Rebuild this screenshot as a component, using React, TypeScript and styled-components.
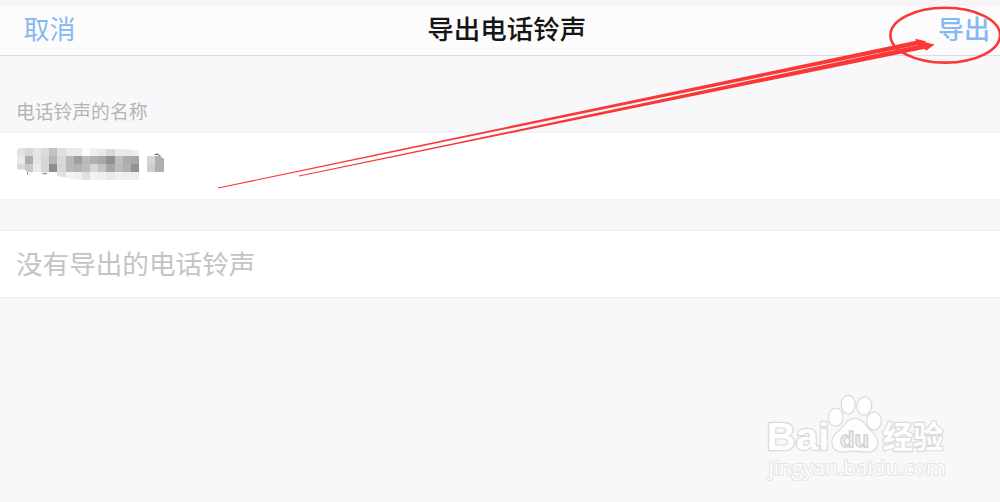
import styled, { createGlobalStyle } from "styled-components";

// grey levels of the blurred name, one row of cells per line, 0 = empty
const MOSAIC = [
  [226, 215, 229, 219, 194, 222, 234, 234, 252, 238, 232, 216, 232, 232, 238, 0, 0, 0],
  [233, 173, 228, 214, 181, 216, 184, 158, 186, 176, 168, 145, 191, 173, 168, 0, 214, 176],
  [217, 201, 235, 215, 141, 214, 184, 178, 189, 214, 196, 166, 188, 176, 146, 0, 206, 174],
  [0, 0, 0, 0, 0, 225, 243, 240, 224, 242, 240, 233, 240, 238, 238, 0, 0, 0],
];
const CELL = 8.17;

function App() {
  return (
    <Page>
      <GlobalStyle />
      <StatusStrip />
      <NavBar>
        <NavButton>取消</NavButton>
        <Title>导出电话铃声</Title>
        <NavButton $strong>导出</NavButton>
      </NavBar>
      <SectionLabel>电话铃声的名称</SectionLabel>
      <Row>
        <Mosaic />
      </Row>
      <Gap />
      <Row>
        <EmptyText>没有导出的电话铃声</EmptyText>
      </Row>
      <Marker />
      <Watermark />
    </Page>
  );
}

export default App;

function Mosaic() {
  return (
    <MosaicSvg width="150" height="34" viewBox="0 0 150 34">
      <clipPath id="smudge">
        <path d="M0.5 5Q0.5 0 5 0H66L124 2V32.5H66L41 28V24.5H11Q10 21.5 7 21.5H0.5ZM131 7H142L148.5 11V25H131Z" />
      </clipPath>
      <g clipPath="url(#smudge)" shapeRendering="crispEdges">
        {MOSAIC.map((cells, y) =>
          cells.map((v, x) =>
            v ? (
              <rect
                key={`${x}-${y}`}
                x={x * CELL + 0.5}
                y={y * CELL - 0.4}
                width={CELL + 0.1}
                height={CELL + 0.1}
                fill={`rgb(${v},${v},${v})`}
              />
            ) : null
          )
        )}
      </g>
      <path d="M11.5 24.5v2M26.5 25l2.2 1 2.2-1M138.5 6.5l3-.4 3 2" fill="none" stroke="#777" strokeWidth="1.1" />
    </MosaicSvg>
  );
}

// hand drawn arrow and circle round the export button
function Marker() {
  return (
    <Overlay width="1000" height="200" viewBox="0 0 1000 200">
      <ellipse cx="945.2" cy="35.2" rx="54.8" ry="27.4" fill="none" stroke="#fb3636" strokeWidth="2.6" />
      <g fill="#fb3636">
        <path d="M218 187.6L450 138.8L916 40.8L915 38.8L926 41.2L921 46L917 45.2L450 140.6L218 188.5Z" />
        <path d="M299 175.5L450 143.9L922 44.2L924 42L934.5 44.4L926.5 50.4L924 49L450 145.5L299 176.5Z" />
      </g>
    </Overlay>
  );
}

function Watermark() {
  return (
    <WatermarkSvg width="200" height="100" viewBox="0 0 200 100">
      <g fill="#fefefe" stroke="#d9dadc" strokeWidth="2.4" paintOrder="stroke" strokeLinejoin="round">
        <Latin x="16.5" y="65.3" fontSize="39" textLength="63" lengthAdjust="spacingAndGlyphs">
          Bai
        </Latin>
        <ellipse cx="85.7" cy="32.3" rx="6.7" ry="8.5" />
        <ellipse cx="98.3" cy="19.6" rx="6.5" ry="8.8" />
        <ellipse cx="114.3" cy="21" rx="6.8" ry="8.5" transform="rotate(10 114.3 21)" />
        <ellipse cx="124" cy="36" rx="6.7" ry="8.5" />
        <path d="M104.5 34C97 34 95 41 89.5 46C84.5 50 82 53.5 82.5 58.5C83.5 64 87.5 66.5 92.5 66.5C97 66.5 100 65.5 104.5 65.5C109 65.5 112 66.5 117 66.5C122.5 66.5 126.5 64 127.2 58.5C127.5 53.5 124.5 50 120.5 46C115 41 112 34 104.5 34Z" />
        <text x="132.5" y="62.5" fontSize="30.5" fontWeight="700" textLength="61" lengthAdjust="spacingAndGlyphs">
          经验
        </text>
        <text
          x="18.5"
          y="90"
          fontSize="20"
          stroke="#e3e4e6"
          strokeWidth="2"
          textLength="177"
          lengthAdjust="spacingAndGlyphs"
        >
          jingyan.baidu.com
        </text>
      </g>
      <Latin
        x="90"
        y="61.5"
        fontSize="22"
        fill="#f3f3f4"
        stroke="#d0d1d3"
        strokeWidth="1.3"
        textLength="29"
        lengthAdjust="spacingAndGlyphs"
      >
        du
      </Latin>
    </WatermarkSvg>
  );
}

const GlobalStyle = createGlobalStyle`
  body {
    margin: 0;
    background: #f8f8fa;
    font-family: "Noto Sans CJK SC", sans-serif;
  }
`;
const Page = styled.div`
  position: relative;
  height: 502px;
  overflow: hidden;
  background: #f8f8fa;
`;
const StatusStrip = styled.div`
  height: 6px;
  background: #f4f4f4;
`;
const NavBar = styled.div`
  display: flex;
  align-items: center;
  justify-content: space-between;
  box-sizing: border-box;
  height: 50px;
  padding: 0 10px 5px 23.5px;
  background: #fcfcfc;
  border-bottom: 1px solid #dcdcde;
`;
const NavButton = styled.button<{ $strong?: boolean }>`
  padding: 0;
  border: 0;
  background: none;
  font-family: inherit;
  font-size: 26px;
  line-height: 40px;
  font-weight: ${(props) => (props.$strong ? 500 : 400)};
  color: #86b9f0;
`;
const Title = styled.h1`
  margin: 0;
  font-size: 26.5px;
  line-height: 40px;
  font-weight: 500;
  color: #161616;
`;
const SectionLabel = styled.div`
  height: 76px;
  padding-left: 16px;
  box-sizing: border-box;
  padding-top: 41px;
  font-size: 18.8px;
  line-height: 28px;
  color: #b4b4b5;
`;
const Row = styled.div`
  display: flex;
  align-items: center;
  box-sizing: border-box;
  height: 68px;
  padding: 0 16px;
  background: #fff;
  border-top: 1px solid #f0f0f1;
  border-bottom: 1px solid #f0f0f1;
`;
const Gap = styled.div`
  height: 30px;
`;
const EmptyText = styled.span`
  padding-bottom: 2px;
  font-size: 26.6px;
  line-height: 40px;
  color: #c4c4c4;
`;
const MosaicSvg = styled.svg`
  display: block;
  margin-bottom: 3px;
`;
const Overlay = styled.svg`
  position: absolute;
  top: 0;
  left: 0;
  pointer-events: none;
`;
const WatermarkSvg = styled.svg`
  position: absolute;
  top: 385px;
  left: 750px;
  font-family: "Open Sans", "Noto Sans CJK SC", sans-serif;
`;
const Latin = styled.text`
  font-family: "Liberation Sans", Arial, sans-serif;
  font-weight: 700;
`;
